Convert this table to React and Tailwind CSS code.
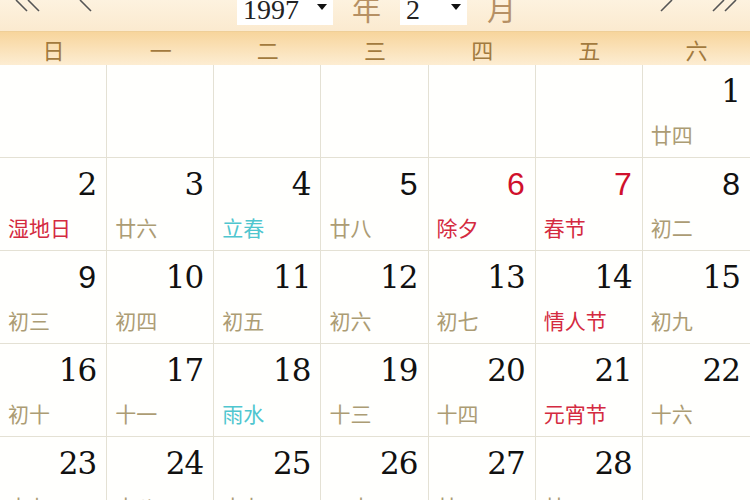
import React from "react";

const weekdays = ["日", "一", "二", "三", "四", "五", "六"];

// c: label colour, r: red number, s: sans number
const rows = [
  [null, null, null, null, null, null, { d: 1, l: "廿四" }],
  [
    { d: 2, l: "湿地日", c: "red" },
    { d: 3, l: "廿六" },
    { d: 4, l: "立春", c: "cyan" },
    { d: 5, l: "廿八", s: true },
    { d: 6, l: "除夕", c: "red", r: true, s: true },
    { d: 7, l: "春节", c: "red", r: true, s: true },
    { d: 8, l: "初二", s: true },
  ],
  [
    { d: 9, l: "初三", s: true },
    { d: 10, l: "初四" },
    { d: 11, l: "初五" },
    { d: 12, l: "初六" },
    { d: 13, l: "初七" },
    { d: 14, l: "情人节", c: "red" },
    { d: 15, l: "初九" },
  ],
  [
    { d: 16, l: "初十" },
    { d: 17, l: "十一" },
    { d: 18, l: "雨水", c: "cyan" },
    { d: 19, l: "十三" },
    { d: 20, l: "十四" },
    { d: 21, l: "元宵节", c: "red" },
    { d: 22, l: "十六" },
  ],
  [
    { d: 23, l: "十七" },
    { d: 24, l: "十八" },
    { d: 25, l: "十九" },
    { d: 26, l: "二十" },
    { d: 27, l: "廿一" },
    { d: 28, l: "廿二" },
    null,
  ],
];

const labelColor = (c) => {
  if (c === "red") return "text-[#d42a40]";
  if (c === "cyan") return "text-[#4fc6cf]";
  return "text-[#ac9c74]";
};

const Caret = () => (
  <svg width="10" height="6" viewBox="0 0 10 6" className="shrink-0">
    <path d="M0 0 L10 0 L5 6 Z" fill="#111" />
  </svg>
);

// lower halves of the nav chevrons, the upper part is scrolled away
const Chevrons = ({ count, dir }) => (
  <svg width={count === 2 ? 30 : 16} height="14" viewBox={`0 0 ${count === 2 ? 30 : 16} 14`}>
    {Array.from({ length: count }).map((_, i) => {
      const x = 2 + i * 12;
      return dir === "left" ? (
        <path key={i} d={`M${x} 0 L${x + 11} 11`} stroke="#555" strokeWidth="1.6" fill="none" />
      ) : (
        <path key={i} d={`M${x + 11} 0 L${x} 11`} stroke="#555" strokeWidth="1.6" fill="none" />
      );
    })}
  </svg>
);

const Select = ({ value, width }) => (
  <div
    className={`h-[37px] bg-white flex items-center justify-between pl-[6px] pr-[6px] ${width}`}
  >
    <span className="text-[28px] leading-none text-[#222] [font-family:'Liberation_Serif',serif] mt-[6px]">
      {value}
    </span>
    <Caret />
  </div>
);

export default function App() {
  return (
    <div className="w-[750px] h-[500px] overflow-hidden bg-white [font-family:'Noto_Sans_CJK_SC',sans-serif]">
      {/* top bar, scrolled partly out of view */}
      <div className="h-[32px] overflow-hidden bg-gradient-to-b from-[#fdf2df] to-[#fbeacf] border-b border-[#efcf98]">
        <div className="-mt-[12px] h-[37px] flex items-center">
          <div className="ml-[14px] mt-[12px] self-start">
            <Chevrons count={2} dir="left" />
          </div>
          <div className="ml-[34px] mt-[12px] self-start">
            <Chevrons count={1} dir="left" />
          </div>
          <div className="ml-[143px]">
            <Select value="1997" width="w-[96px]" />
          </div>
          <span className="ml-[19px] text-[29px] leading-none text-[#b69064] mt-[4px]">年</span>
          <div className="ml-[19px]">
            <Select value="2" width="w-[67px]" />
          </div>
          <span className="ml-[20px] text-[29px] leading-none text-[#b69064] mt-[4px]">月</span>
          <div className="ml-[143px] mt-[12px] self-start">
            <Chevrons count={1} dir="right" />
          </div>
          <div className="ml-[36px] mt-[12px] self-start">
            <Chevrons count={2} dir="right" />
          </div>
        </div>
      </div>

      {/* weekday band */}
      <div className="grid grid-cols-7 h-[33px] bg-gradient-to-b from-[#f7d59c] to-[#fdedd2]">
        {weekdays.map((w) => (
          <div
            key={w}
            className="flex items-center justify-center text-[22px] leading-none text-[#a27a3e]"
          >
            {w}
          </div>
        ))}
      </div>

      {/* days */}
      <div className="grid grid-cols-7">
        {rows.flat().map((cell, i) => (
          <div
            key={i}
            className={`h-[93px] border-b border-[#e4e1d4] bg-[#fffffd] ${
              i % 7 === 6 ? "" : "border-r"
            }`}
          >
            {cell && (
              <div className="flex flex-col">
                <div
                  className={`pt-[11px] pr-[10px] text-right h-[41px] leading-[30px] ${
                    cell.s
                      ? "text-[32px] [font-family:'Liberation_Sans',sans-serif]"
                      : "text-[31px] tracking-[-1px] [font-family:'DejaVu_Serif',serif]"
                  } ${cell.r ? "text-[#d0102c]" : "text-[#111]"}`}
                >
                  {cell.d}
                </div>
                <div
                  className={`mt-[18px] pl-[8px] text-[21px] leading-[21px] ${labelColor(
                    cell.c
                  )}`}
                >
                  {cell.l}
                </div>
              </div>
            )}
          </div>
        ))}
      </div>
    </div>
  );
}
